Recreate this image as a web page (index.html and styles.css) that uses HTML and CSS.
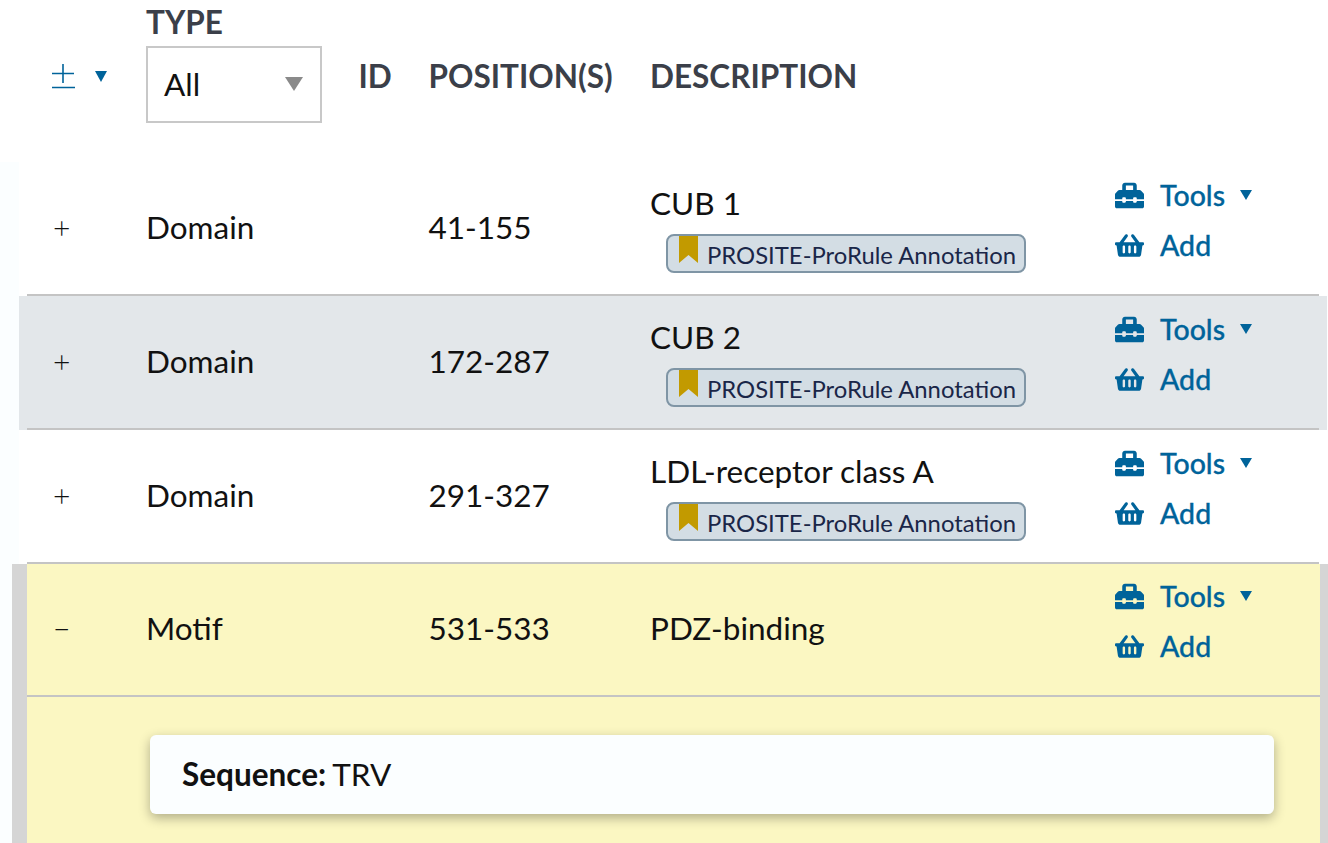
FILE: index.html
```html
<!DOCTYPE html>
<html lang="en">
<head>
<meta charset="utf-8">
<title>Family and domains</title>
<link rel="stylesheet" href="styles.css">
</head>
<body>
<svg class="defs" aria-hidden="true">
  <symbol id="toolbox" viewBox="0 0 512 512"><path d="M502.63 214.63l-45.25-45.25c-6-6-14.14-9.37-22.63-9.37H384V80c0-26.51-21.49-48-48-48H176c-26.51 0-48 21.49-48 48v80H77.25c-8.49 0-16.62 3.37-22.63 9.37L9.37 214.63c-6 6-9.37 14.14-9.37 22.63V320h128v-16c0-8.84 7.16-16 16-16h32c8.84 0 16 7.16 16 16v16h128v-16c0-8.84 7.16-16 16-16h32c8.84 0 16 7.16 16 16v16h128v-82.75c0-8.48-3.37-16.62-9.37-22.62zM320 160H192V80h128v80zm64 208c0 8.84-7.16 16-16 16h-32c-8.84 0-16-7.16-16-16v-16H192v16c0 8.84-7.16 16-16 16h-32c-8.84 0-16-7.16-16-16v-16H0v96c0 17.67 14.33 32 32 32h448c17.67 0 32-14.33 32-32v-96H384v16z"/></symbol>
  <symbol id="basket" viewBox="0 0 576 512"><path d="M576 216v16c0 13.255-10.745 24-24 24h-8l-26.113 182.788C514.509 462.435 494.257 480 470.37 480H105.63c-23.887 0-44.139-17.565-47.518-41.212L32 256h-8c-13.255 0-24-10.745-24-24v-16c0-13.255 10.745-24 24-24h67.341l106.78-146.821c10.395-14.292 30.407-17.453 44.701-7.058 14.293 10.395 17.453 30.408 7.058 44.701L170.477 192h235.046L326.12 82.821c-10.395-14.292-7.234-34.306 7.059-44.701 14.291-10.395 34.306-7.235 44.701 7.058L484.659 192H552c13.255 0 24 10.745 24 24zM312 392V280c0-13.255-10.745-24-24-24s-24 10.745-24 24v112c0 13.255 10.745 24 24 24s24-10.745 24-24zm112 0V280c0-13.255-10.745-24-24-24s-24 10.745-24 24v112c0 13.255 10.745 24 24 24s24-10.745 24-24zm-224 0V280c0-13.255-10.745-24-24-24s-24 10.745-24 24v112c0 13.255 10.745 24 24 24s24-10.745 24-24z"/></symbol>
</svg>

<header class="head grid">
  <div class="expand-all"><svg class="plusminus" viewBox="0 0 24 26" role="img" aria-label="Expand all"><path d="M12 1v19M1 10.500h22M1 24.500h23"/></svg><span class="caret"></span></div>
  <div class="type-col">
    <div class="type-label">TYPE</div>
    <div class="select"><span>All</span><i class="select-arrow"></i></div>
  </div>
  <div>ID</div>
  <div>POSITION(S)</div>
  <div>DESCRIPTION</div>
</header>

<main class="rows">
  <section class="row">
    <div class="grid cells">
      <div class="toggle">+</div><div>Domain</div><div>41-155</div>
      <div class="desc"><div>CUB 1</div><div class="badge"><svg class="mark" viewBox="0 0 19 27"><path d="M0 0h19v27l-9.500-8L0 27z"/></svg>PROSITE-ProRule Annotation</div></div>
      <div class="actions"><a class="action"><svg class="ico"><use href="#toolbox"/></svg>Tools<span class="caret small"></span></a><a class="action"><svg class="ico"><use href="#basket"/></svg>Add</a></div>
    </div>
  </section>
  <section class="row alt">
    <div class="grid cells">
      <div class="toggle">+</div><div>Domain</div><div>172-287</div>
      <div class="desc"><div>CUB 2</div><div class="badge"><svg class="mark" viewBox="0 0 19 27"><path d="M0 0h19v27l-9.500-8L0 27z"/></svg>PROSITE-ProRule Annotation</div></div>
      <div class="actions"><a class="action"><svg class="ico"><use href="#toolbox"/></svg>Tools<span class="caret small"></span></a><a class="action"><svg class="ico"><use href="#basket"/></svg>Add</a></div>
    </div>
  </section>
  <section class="row">
    <div class="grid cells">
      <div class="toggle">+</div><div>Domain</div><div>291-327</div>
      <div class="desc"><div>LDL-receptor class A</div><div class="badge"><svg class="mark" viewBox="0 0 19 27"><path d="M0 0h19v27l-9.500-8L0 27z"/></svg>PROSITE-ProRule Annotation</div></div>
      <div class="actions"><a class="action"><svg class="ico"><use href="#toolbox"/></svg>Tools<span class="caret small"></span></a><a class="action"><svg class="ico"><use href="#basket"/></svg>Add</a></div>
    </div>
  </section>
  <section class="open">
    <div class="grid cells">
      <div class="toggle">−</div><div>Motif</div><div>531-533</div>
      <div class="desc"><div>PDZ-binding</div></div>
      <div class="actions"><a class="action"><svg class="ico"><use href="#toolbox"/></svg>Tools<span class="caret small"></span></a><a class="action"><svg class="ico"><use href="#basket"/></svg>Add</a></div>
    </div>
    <div class="detail"><div class="card"><b>Sequence:</b> TRV</div></div>
  </section>
</main>
</body>
</html>
```
FILE: styles.css
```css
* { box-sizing: border-box; }
html, body { margin: 0; height: 843px; overflow: hidden; }
body { background: #fff; color: #111; font-family: Lato, sans-serif; font-size: 31.5px; line-height: 40px; }
.defs { display: none; }

.grid { display: grid; grid-template-columns: 119px 282.5px 221.5px 465px 1fr; align-items: center; }

.head { grid-template-columns: 119px 212.500px 70px 221.500px 1fr; height: 162px; padding: 0 0 10px 27px; font-size: 31.5px; font-weight: 700; color: #3b3f49; }
.expand-all { display: flex; align-items: center; padding-left: 24px; }
.plusminus { width: 24px; height: 26px; margin-right: 20px; fill: none; stroke: #00639a; stroke-width: 1.6; }
.caret { width: 0; height: 0; border-left: 6.5px solid transparent; border-right: 6.5px solid transparent; border-top: 11px solid #00639a; }
.caret.small { margin-left: 15px; border-left-width: 6px; border-right-width: 6px; border-top-width: 10px; }
.type-label { line-height: 36px; margin-top: -27px; }
.select { width: 176px; height: 77px; margin-top: 6px; margin-bottom: -2px; border: 2px solid #c8c8c8; display: flex; align-items: center; justify-content: space-between; padding: 0 17px 2px 16px; font-weight: 400; color: #111; }
.select-arrow { width: 0; height: 0; border-left: 9px solid transparent; border-right: 9px solid transparent; border-top: 14px solid #8a8a8a; }

.rows { border-left: 19px solid #fbfeff; }
.row { padding: 0 8px; margin-right: 1px; }
.row.alt { background: #e3e7ea; }
.cells { height: 134px; padding-bottom: 2px; border-bottom: 2px solid #c4c4c4; }
.toggle { padding-left: 26px; font-size: 30px; font-weight: 300; }

.desc { display: flex; flex-direction: column; gap: 11px; margin-top: 2px; }
.badge { display: flex; align-items: flex-start; align-self: flex-start; width: 360px; height: 39px; margin-left: 16px; border: 2px solid #7f95a5; border-radius: 8px; background: #d3dde4; color: #1a2648; font-size: 23.85px; line-height: 38px; white-space: nowrap; padding-left: 11px; }
.mark { width: 19px; height: 27px; margin-right: 9px; fill: #c29a00; flex: none; }

.actions { display: flex; flex-direction: column; gap: 10px; margin-top: -14px; }
.action { display: flex; align-items: center; color: #00639a; font-size: 28.5px; font-weight: 500; line-height: 40px; -webkit-text-stroke: .3px #00639a; }
.ico { width: 29px; height: 29px; margin-right: 16px; fill: #00639a; flex: none; }

.open { margin-left: -7px; background: #fbf7c2; border-left: 15px solid #d5d5d5; border-right: 8px solid #d5d5d5; }
.open .cells { height: 133px; padding-bottom: 3px; }
.open .desc { margin-top: 0; }
.detail { padding: 38px 46px 60px 123px; }
.card { height: 79px; background: #fbfeff; border-radius: 6px; box-shadow: 0 4px 12px rgba(0,0,0,.3); padding: 0 32px 2px; display: flex; align-items: center; gap: 6px; }
```
